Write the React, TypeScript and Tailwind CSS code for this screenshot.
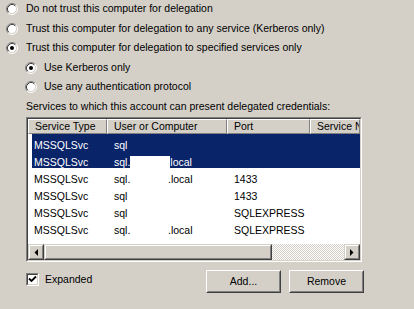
import type { ReactNode } from "react";

type Row = { type: string; user: ReactNode; port: string; selected?: boolean };

function Radio({ checked }: { checked?: boolean }) {
  return (
    <svg width="12" height="12" viewBox="0 0 12 12" className="shrink-0">
      <circle cx="6" cy="6" r="4.5" fill="#fff" />
      <path d="M2.11 9.89A5.5 5.5 0 0 1 9.89 2.11" fill="none" stroke="#808080" />
      <path d="M2.82 9.18A4.5 4.5 0 0 1 9.18 2.82" fill="none" stroke="#404040" />
      <path d="M9.89 2.11A5.5 5.5 0 0 1 2.11 9.89" fill="none" stroke="#fff" />
      <path d="M9.18 2.82A4.5 4.5 0 0 1 2.82 9.18" fill="none" stroke="#d4d0c8" />
      {checked && <circle cx="6" cy="6" r="2" fill="#000" />}
    </svg>
  );
}

function Raised({ className, children }: { className?: string; children?: ReactNode }) {
  return (
    <div className={`border border-t-[#d4d0c8] border-l-[#d4d0c8] border-b-[#404040] border-r-[#404040] ${className ?? ""}`}>
      <div className="w-full h-full border border-t-white border-l-white border-b-[#808080] border-r-[#808080] bg-[#d4d0c8] flex items-center justify-center">
        {children}
      </div>
    </div>
  );
}

const rows: Row[] = [
  { type: "MSSQLSvc", user: "sql", port: "", selected: true },
  {
    type: "MSSQLSvc",
    user: (
      <span className="flex items-start">
        sql.
        <span className="inline-block w-[40px] h-[13px] bg-white mt-[1px]" />
        local
      </span>
    ),
    port: "",
    selected: true,
  },
  { type: "MSSQLSvc", user: <span className="flex"><span className="w-[54px]">sql.</span>.local</span>, port: "1433" },
  { type: "MSSQLSvc", user: "sql", port: "1433" },
  { type: "MSSQLSvc", user: "sql", port: "SQLEXPRESS" },
  { type: "MSSQLSvc", user: <span className="flex"><span className="w-[54px]">sql.</span>.local</span>, port: "SQLEXPRESS" },
];

const headers = [
  { label: "Service Type", w: "w-[79px]" },
  { label: "User or Computer", w: "w-[120px]" },
  { label: "Port", w: "w-[83px]" },
  { label: "Service Name", w: "flex-1" },
];

export default function App() {
  return (
    <div className="w-[414px] h-[309px] bg-[#d4d0c8] overflow-hidden text-black text-[10.5px] font-['Liberation_Sans',Arial,sans-serif]">
      {/* delegation options */}
      <div className="flex flex-col mt-[-0.5px]">
        <div className="h-[19.5px] flex items-center pl-[6px] gap-[8px]">
          <Radio />
          <span>Do not trust this computer for delegation</span>
        </div>
        <div className="h-[19.5px] flex items-center pl-[6px] gap-[8px]">
          <Radio />
          <span>Trust this computer for delegation to any service (Kerberos only)</span>
        </div>
        <div className="h-[19.5px] flex items-center pl-[6px] gap-[8px]">
          <Radio checked />
          <span>Trust this computer for delegation to specified services only</span>
        </div>
        <div className="h-[19.5px] flex items-center pl-[25px] gap-[7px]">
          <Radio checked />
          <span>Use Kerberos only</span>
        </div>
        <div className="h-[19.5px] flex items-center pl-[25px] gap-[7px]">
          <Radio />
          <span>Use any authentication protocol</span>
        </div>
      </div>

      <div className="h-[20px] flex items-center pl-[26px]">
        Services to which this account can present delegated credentials:
      </div>

      {/* list view */}
      <div className="ml-[26px] w-[336px] h-[145px] border border-t-[#808080] border-l-[#808080] border-b-white border-r-white">
        <div className="w-full h-full border border-t-[#404040] border-l-[#404040] border-b-[#d4d0c8] border-r-[#d4d0c8] bg-white flex flex-col overflow-hidden">
          <div className="h-[15px] flex shrink-0">
            {headers.map((h) => (
              <div
                key={h.label}
                className={`${h.w} h-full bg-[#d4d0c8] border-t border-l border-t-white border-l-white border-r border-b border-r-[#808080] border-b-[#808080] pl-[6px] flex items-center whitespace-nowrap overflow-hidden`}
              >
                {h.label}
              </div>
            ))}
          </div>
          <div className="flex-1 flex flex-col">
            {rows.map((r, i) => (
              <div key={i} className="h-[17px] pl-[4px] flex">
                <div className={`flex-1 flex leading-[14px] pt-[4px] ${r.selected ? "bg-[#0a246a] text-white" : ""}`}>
                  <div className="w-[75px] pl-[2px]">{r.type}</div>
                  <div className="w-[120px] pl-[7px]">{r.user}</div>
                  <div className="w-[83px] pl-[7px]">{r.port}</div>
                  <div className="flex-1" />
                </div>
              </div>
            ))}
          </div>
          {/* horizontal scrollbar */}
          <div className="h-[16px] flex shrink-0">
            <Raised className="w-[16px] h-full">
              <svg width="4" height="7" viewBox="0 0 4 7">
                <path d="M4 0V7L0.5 3.5Z" fill="#000" />
              </svg>
            </Raised>
            <Raised className="w-[228px] h-full" />
            <div className="flex-1 h-full bg-[image:repeating-conic-gradient(#fff_0_25%,#d4d0c8_0_50%)] bg-[length:2px_2px]" />
            <Raised className="w-[16px] h-full">
              <svg width="4" height="7" viewBox="0 0 4 7">
                <path d="M0 0V7L3.5 3.5Z" fill="#000" />
              </svg>
            </Raised>
          </div>
        </div>
      </div>

      {/* bottom row */}
      <div className="flex items-start mt-[8px]">
        <div className="ml-[26px] mt-[2px] flex items-center gap-[6px]">
          <div className="w-[13px] h-[13px] border border-t-[#808080] border-l-[#808080] border-b-white border-r-white">
            <div className="w-full h-full border border-t-[#404040] border-l-[#404040] border-b-[#d4d0c8] border-r-[#d4d0c8] bg-white flex items-center justify-center">
              <svg width="9" height="9" viewBox="0 0 9 9">
                <polyline points="1,3.5 3.5,6 8,1.5" fill="none" stroke="#000" strokeWidth="1.8" />
              </svg>
            </div>
          </div>
          <span>Expanded</span>
        </div>
        <div className="ml-auto mr-[50px] flex gap-[8px]">
          <button className="w-[75px] h-[23px] border border-t-white border-l-white border-b-[#404040] border-r-[#404040] bg-[#d4d0c8]">
            <div className="w-full h-full border border-transparent border-b-[#808080] border-r-[#808080] flex items-center justify-center">
              Add...
            </div>
          </button>
          <button className="w-[75px] h-[23px] border border-t-white border-l-white border-b-[#404040] border-r-[#404040] bg-[#d4d0c8]">
            <div className="w-full h-full border border-transparent border-b-[#808080] border-r-[#808080] flex items-center justify-center">
              Remove
            </div>
          </button>
        </div>
      </div>
    </div>
  );
}
